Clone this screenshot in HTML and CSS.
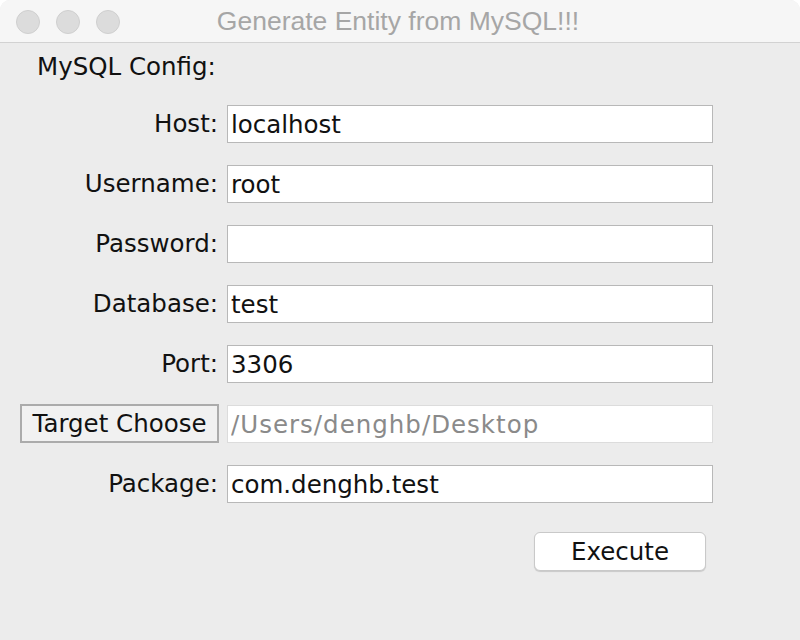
FILE: index.html
```html
<!DOCTYPE html>
<html>
<head>
<meta charset="utf-8">
<link rel="stylesheet" href="styles.css">
</head>
<body>
<div class="window">
  <div class="titlebar">
    <div class="lights">
      <span class="light"></span>
      <span class="light"></span>
      <span class="light"></span>
    </div>
    <div class="title">Generate Entity from MySQL!!!</div>
  </div>
  <div class="content">
    <div class="heading">MySQL Config:</div>
    <div class="form">
      <label class="label">Host:</label>
      <input class="field" type="text" value="localhost">
      <label class="label">Username:</label>
      <input class="field" type="text" value="root">
      <label class="label">Password:</label>
      <input class="field" type="password" value="">
      <label class="label">Database:</label>
      <input class="field" type="text" value="test">
      <label class="label">Port:</label>
      <input class="field" type="text" value="3306">
      <button class="choose">Target Choose</button>
      <input class="field disabled" type="text" value="/Users/denghb/Desktop" disabled>
      <label class="label">Package:</label>
      <input class="field" type="text" value="com.denghb.test">
    </div>
    <div class="actions">
      <button class="execute">Execute</button>
    </div>
  </div>
</div>
</body>
</html>
```
FILE: styles.css
```css
html, body {
  margin: 0;
  padding: 0;
  background: #ffffff;
}
.window {
  width: 800px;
  height: 640px;
  background: #ececec;
  border-radius: 10px 10px 0 0;
  overflow: hidden;
  display: flex;
  flex-direction: column;
  font-family: "DejaVu Sans", sans-serif;
  font-size: 24.5px;
  color: #111;
}
.titlebar {
  height: 42px;
  background: #f6f6f6;
  border-bottom: 1px solid #d2d2d2;
  display: flex;
  align-items: center;
  position: relative;
}
.lights {
  display: flex;
  gap: 16px;
  padding-left: 16px;
  padding-top: 1px;
}
.light {
  width: 22px;
  height: 22px;
  border-radius: 50%;
  background: #dcdcdc;
  border: 1px solid #cfcfcf;
}
.title {
  position: absolute;
  left: 0;
  right: 0;
  top: 0;
  bottom: 0;
  display: flex;
  align-items: center;
  justify-content: center;
  font-family: "Liberation Sans", Arial, sans-serif;
  font-size: 26.5px;
  color: #a6a6a6;
  padding-right: 4px;
}
.content {
  padding: 9px 0 0 20px;
}
.heading {
  padding-left: 17px;
  height: 30px;
  line-height: 30px;
}
.form {
  margin-top: 23px;
  display: grid;
  grid-template-columns: 199px 486px;
  grid-auto-rows: 38px;
  column-gap: 8px;
  row-gap: 22px;
}
.label {
  text-align: right;
  line-height: 38px;
  padding-right: 1px;
}
.field {
  box-sizing: border-box;
  height: 38px;
  margin: 0;
  border: 1px solid #b8b8b8;
  background: #ffffff;
  font: inherit;
  color: #111;
  padding: 0 3px;
  outline: none;
}
.field.disabled {
  border-color: #dcdcdc;
  color: #8a8a8a;
  -webkit-text-fill-color: #8a8a8a;
  letter-spacing: 1px;
}
.choose {
  box-sizing: border-box;
  height: 39px;
  margin: -1px 0 0 0;
  border: 2px solid #ababab;
  background: #f1f1f1;
  font: inherit;
  color: #111;
  padding: 0;
}
.actions {
  display: flex;
  justify-content: flex-end;
  width: 686px;
  margin-top: 29px;
}
.execute {
  box-sizing: border-box;
  width: 172px;
  height: 39px;
  border: 1px solid #c9c9c9;
  border-radius: 6px;
  background: #ffffff;
  box-shadow: 0 1px 1px rgba(0,0,0,0.15);
  font: inherit;
  color: #111;
  padding: 0;
}
```
